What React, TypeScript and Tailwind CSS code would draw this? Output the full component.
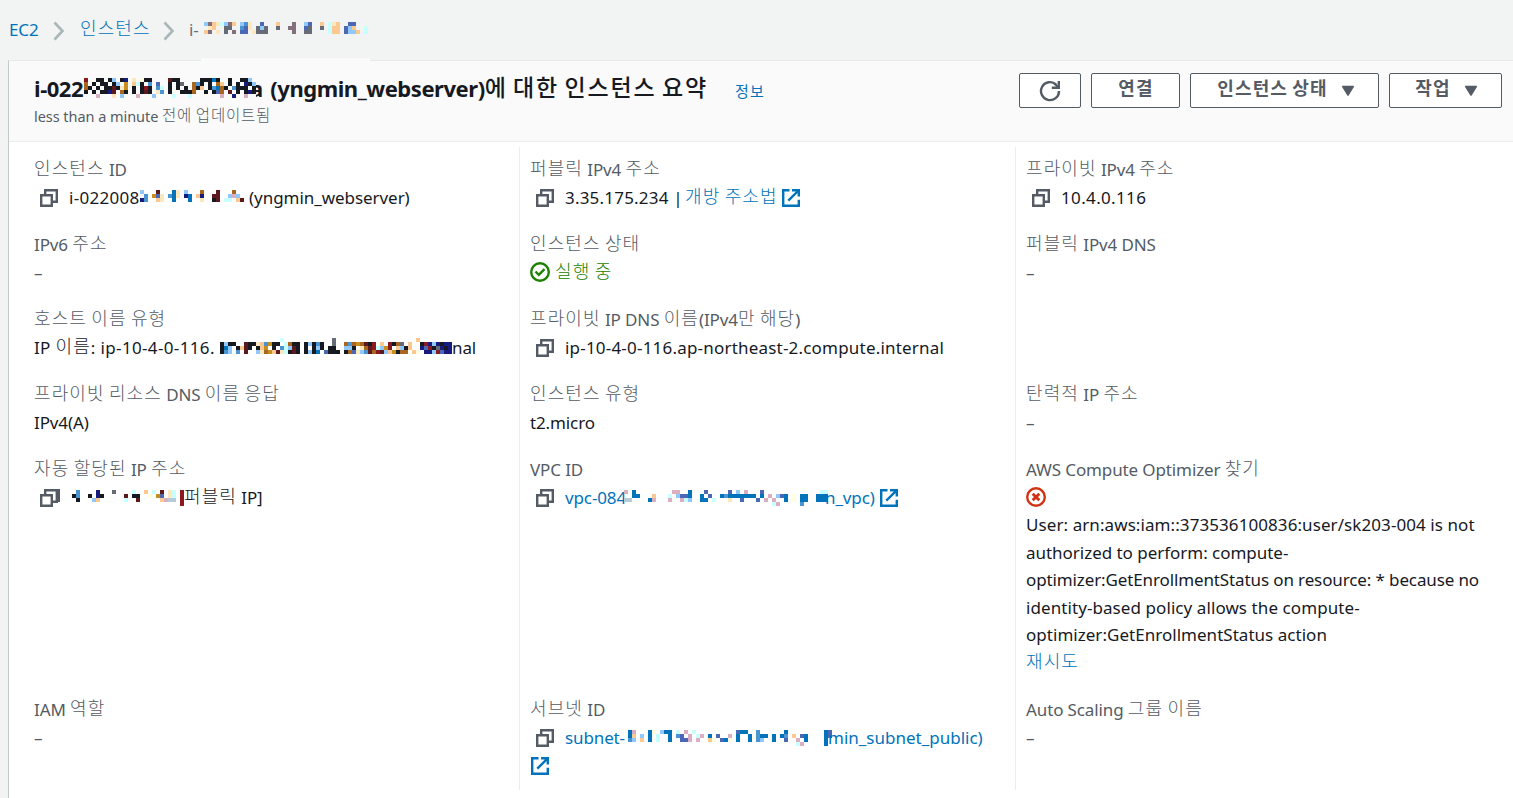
import type { ReactNode } from "react"
import clsx from "clsx"

const COLORS: Record<string, string> = {
  k: "#16191f", n: "#161b7d", b: "#0073bb", s: "#90c8fb", m: "#4a94d2", o: "#a9661f",
  g: "#c98f1e", t: "#fbc890", c: "#fde8bd", y: "#ffffe0", l: "#c8ffff", r: "#5c1a1f",
  R: "#8b1a20", G: "#666b75", p: "#84707d", u: "#dbaec2", v: "#4a68b4", q: "#b5ccd8",
}

const MASKS = {
  crumb: [
    "sptclspt.smc..v...t...p..sv..t.lct..vv...",
    ".ct..GG..mvc.GsG..G..pp..vG..G.ltt.vst..l",
    "tp.c.G.p.vv.cGGG......p..GG....ltt.vsst.l",
  ],
  title: [
    "R..kk.ks.kn.c.ykk....rkk.....kkkbk..k..kks.",
    "o.k.kk.ks.g.tlk.m.v..k.kG..omk.k.ot.k.k.nks",
    "ok.k.kkrkcg.k.kRk.ml.k.k.k.okt.kmbok.mkkk.k",
    "k.k.kknr.ok.k.krk.cm.k..kkko..k.kvo.r.k.knk",
    "...u...c.s...u...s....l...l.......u..n..u..",
  ],
  instanceId: [
    "s...r...bc.s...o...r...o..",
    ".m.gvc.mbc.nb.tn..rr..sus.",
    "nm..tc..b...b..c..kr.ll.tr",
  ],
  hostname: [
    "...............l............G....................t",
    "kskk..rkkctmgkk.lokk.kskmk..G..omogorkR.t.RkoG.t..kRnsnknn",
    "kbs.ktrk.ktg.k.mlsrk.k.ksk.kk..ssk.corRlsgR.tskt..nvRkGnkn",
    "kms.m.r..scogtrclkrk.kskb.vkkk.kovcsmroRrstgkoo.ty.nnsRvnn",
  ],
  autoIp: [
    ".m....n...G....l..t.l.r.cl.R",
    "km..k.nk.....r.kk..y.gv.cl.R",
    ".k...st......l..r.....tuqq.R",
    "...........................R",
  ],
  vpc: [
    "u.b.........uu..b...v.....v.s.u...v..............ll",
    "..bb...t...l.svvb..b.v..bmbbbbbbb.b.u.svb.y.bb..bbb",
    "qq....bu...u..uls..bb.l...c..v...v.u.u..b.y.bb..bbb",
    ".....................................lu.....m",
  ],
  subnet: [
    "bu...by.sbb.l.u.l..........vbb..m......b.........bv",
    "bt.s.b.l..b.mv.u.lu.b.v..u.b..b.mbb.b.bm.t.vb....bv",
    "ms.t.b.l..b..vvu.u..ty.vby.b..b.ms..b..v..u.b....b",
    "..........................................lu.....b",
  ],
}

function Mosaic({ rows, className }: { rows: string[]; className?: string }) {
  const cols = Math.max(...rows.map(row => row.length))
  return (
    <svg
      width={cols * 4}
      height={rows.length * 4}
      shapeRendering="crispEdges"
      className={clsx("block shrink-0", className)}
    >
      {rows.map((row, y) =>
        row.split("").map((cell, x) =>
          COLORS[cell] ? <rect key={`${x}-${y}`} x={x * 4} y={y * 4} width="4" height="4" fill={COLORS[cell]} /> : null
        )
      )}
    </svg>
  )
}

// Hangul runs get their own size, weight and tracking
function Txt({ children, className, ko = "text-[18px] font-light tracking-[1.1px]" }: { children: string; className?: string; ko?: string }) {
  return (
    <span className={clsx("whitespace-pre", className)}>
      {children.split(/([가-힣]+)/).map((part, i) =>
        i % 2 ? <span key={i} className={clsx("relative -top-px font-['Noto_Sans_CJK_KR',sans-serif] leading-none", ko)}>{part}</span> : part
      )}
    </span>
  )
}

function CopyIcon({ smeared }: { smeared?: boolean }) {
  return (
    <svg width="20" height="18" className="ml-[6px] mr-[9px] shrink-0" fill="none" stroke="#545b64" strokeWidth="2.4">
      <path d="M1.2 6.2h10.6v10.6H1.2z" />
      <path d="M5.2 6V1.2h11.6v11.6H12" />
      {smeared && <path d="M16 0h4v13h-4z" fill="#545b64" stroke="none" />}
    </svg>
  )
}

function ExternalIcon({ className }: { className?: string }) {
  return (
    <svg width="18" height="18" className={clsx("shrink-0", className)} fill="none" stroke="#0073bb" strokeWidth="2.4">
      <path d="M7.5 1.2H1.2v15.6h15.6v-6" />
      <path d="M10 1.2h6.8v6.3M16.5 1.5 6.3 11.7" />
    </svg>
  )
}

function CheckIcon() {
  return (
    <svg width="20" height="20" className="-mt-[2px] mr-[5px] shrink-0" fill="none" stroke="#1d8102" strokeWidth="2.4">
      <circle cx="10" cy="10" r="8.8" />
      <path d="m5.5 9.5 3.3 3.3 5.7-5.6" />
    </svg>
  )
}

function ErrorIcon() {
  return (
    <svg width="20" height="20" className="-mt-[2px]" fill="none" stroke="#d13212" strokeWidth="2.4">
      <circle cx="10" cy="10" r="8.8" />
      <path d="m6.7 6.7 6.6 6.6M13.3 6.7l-6.6 6.6" strokeWidth="2.9" />
    </svg>
  )
}

function Chevron({ className }: { className?: string }) {
  return (
    <svg width="12" height="20" className={clsx("shrink-0", className)} fill="none" stroke="#aab7b8" strokeWidth="2.6">
      <path d="m1.5 1.5 8 8.5-8 8.5" />
    </svg>
  )
}

function Caret() {
  return (
    <svg width="14" height="12" className="mt-[1px] shrink-0">
      <path d="M1.8 1.5h10.4L7 10z" fill="#545b64" stroke="#545b64" strokeWidth="1.6" strokeLinejoin="round" />
    </svg>
  )
}

function Button({ children, className }: { children: ReactNode; className: string }) {
  return (
    <button className={clsx("flex h-[35px] shrink-0 items-center justify-center rounded-[2px] border border-[#545b64] bg-white text-[17px] font-bold text-[#545b64]", className)}>
      {children}
    </button>
  )
}

function ButtonText({ children }: { children: string }) {
  return <Txt ko="text-[18px] font-bold tracking-[1.1px]" className="-mt-[1px]">{children}</Txt>
}

function Field({ label, children, className = "h-[75px]" }: { label: string; children: ReactNode; className?: string }) {
  return (
    <div className={className}>
      <div className="h-[28px] pt-px text-[#545b64]"><Txt>{label}</Txt></div>
      {children}
    </div>
  )
}

function Value({ children, className }: { children: ReactNode; className?: string }) {
  return <div className={clsx("flex h-[28px] items-center pt-[2px]", className)}>{children}</div>
}

const Dash = () => <Value className="text-[#545b64]">–</Value>

const COLUMN = "h-[643px] pt-[8px] shrink-0"

export default function App() {
  return (
    <div className="h-[798px] w-[1513px] overflow-hidden bg-[#f2f3f3] font-['Noto_Sans','Noto_Sans_CJK_KR',sans-serif] text-[17px] leading-[28px] tracking-[-0.12px] text-[#16191f]">
      <nav className="flex h-[60px] items-center pl-[9px] text-[#0073bb]">
        <span className="w-[44px]">EC2</span>
        <Chevron className="mt-[2px]" />
        <Txt className="ml-[15px] w-[83px]">인스턴스</Txt>
        <Chevron className="mt-[2px]" />
        <span className="ml-[14px] w-[15px] text-[#687078]">i-</span>
        <Mosaic rows={MASKS.crumb} className="-mt-[4px]" />
      </nav>

      <main className="relative ml-[8px] h-[738px] border-l border-t border-l-[#c3c8c9] border-t-[#e6eaea] bg-white">
        <div className="absolute -top-[3px] left-[192px] h-[4px] w-[169px] bg-[#fafafa]" />
        <header className="flex h-[81px] border-b border-[#eaeded] bg-[#fafafa] pl-[25px]">
          <div className="w-[985px] shrink-0 pt-[13px]">
            <h1 className="flex h-[30px] items-center text-[22px] font-bold tracking-[-0.45px]">
              <span className="-mt-[2px] w-[50px] whitespace-nowrap">i-022</span>
              <Mosaic rows={MASKS.title} className="z-10 -mt-[3px] bg-[#fafafa]" />
              <span className="-ml-[6px] -mt-[2px] w-[13px]">a</span>
              <Txt className="-mt-[2px] ml-[2px] w-[470px]" ko="text-[23px] font-medium tracking-[1.9px]">{" (yngmin_webserver)에 대한 인스턴스 요약"}</Txt>
              <Txt className="font-normal text-[#0073bb]" ko="text-[15px] font-normal tracking-[1.2px]">정보</Txt>
            </h1>
            <p className="text-[14.5px] leading-[24px] text-[#545b64]">
              <Txt ko="text-[15.5px] font-light tracking-[0.8px]" className="tracking-[-0.05px]">less than a minute 전에 업데이트됨</Txt>
            </p>
          </div>
          <div className="flex gap-[10px] pt-[12px]">
            <Button className="w-[62px]">
              <svg width="22" height="22" fill="none" stroke="#545b64" strokeWidth="2.4">
                <path d="M20 11a9 9 0 1 1-3-6.6" />
                <path d="M19.8 1v6.8h-7" />
                <path d="m19.5 7.5-4-4" />
              </svg>
            </Button>
            <Button className="w-[89px] pl-px"><ButtonText>연결</ButtonText></Button>
            <Button className="w-[189px] gap-[13px] pl-[3px]"><ButtonText>인스턴스 상태</ButtonText><Caret /></Button>
            <Button className="w-[113px] gap-[13px] pl-[2px]"><ButtonText>작업</ButtonText><Caret /></Button>
          </div>
        </header>

        <div className="flex pt-[5px]">
          <section className={clsx(COLUMN, "w-[510px] pl-[25px]")}>
            <Field label="인스턴스 ID">
              <Value>
                <CopyIcon />
                <span className="w-[71px] whitespace-nowrap tracking-[0.3px]">i-022008</span>
                <Mosaic rows={MASKS.instanceId} className="-mt-[4px]" />
                <span className="ml-[5px] tracking-[-0.05px]">(yngmin_webserver)</span>
              </Value>
            </Field>
            <Field label="IPv6 주소"><Dash /></Field>
            <Field label="호스트 이름 유형">
              <Value>
                <Txt className="w-[186px] tracking-[0.35px]">IP 이름: ip-10-4-0-116.</Txt>
                <Mosaic rows={MASKS.hostname} className="-mt-[5px]" />
                <span>nal</span>
              </Value>
            </Field>
            <Field label="프라이빗 리소스 DNS 이름 응답"><Value>IPv4(A)</Value></Field>
            <Field label="자동 할당된 IP 주소" className="h-[240px]">
              <Value>
                <CopyIcon smeared />
                <Mosaic rows={MASKS.autoIp} className="ml-[3px]" />
                <Txt>퍼블릭 IP]</Txt>
              </Value>
            </Field>
            <Field label="IAM 역할"><Dash /></Field>
          </section>

          <section className={clsx(COLUMN, "w-[496px] border-l border-[#eaeded] pl-[10px]")}>
            <Field label="퍼블릭 IPv4 주소">
              <Value>
                <CopyIcon />
                <span className="w-[120px] whitespace-pre tracking-[0.2px]">3.35.175.234 | </span>
                <Txt className="w-[97px] text-[#0073bb]">개방 주소법</Txt>
                <ExternalIcon />
              </Value>
            </Field>
            <Field label="인스턴스 상태">
              <Value className="text-[#1d8102]"><CheckIcon /><Txt>실행 중</Txt></Value>
            </Field>
            <Field label="프라이빗 IP DNS 이름(IPv4만 해당)">
              <Value><CopyIcon /><span className="tracking-[0.2px]">ip-10-4-0-116.ap-northeast-2.compute.internal</span></Value>
            </Field>
            <Field label="인스턴스 유형"><Value>t2.micro</Value></Field>
            <Field label="VPC ID" className="h-[240px]">
              <Value className="text-[#0073bb]">
                <CopyIcon />
                <span className="w-[59px] whitespace-nowrap">vpc-084</span>
                <Mosaic rows={MASKS.vpc} />
                <span className="-ml-[3px] w-[55px] whitespace-nowrap">n_vpc)</span>
                <ExternalIcon />
              </Value>
            </Field>
            <Field label="서브넷 ID">
              <Value className="text-[#0073bb]">
                <CopyIcon />
                <span className="w-[63px]">subnet-</span>
                <Mosaic rows={MASKS.subnet} />
                <span className="-ml-[4px] tracking-[0px]">min_subnet_public)</span>
              </Value>
              <Value><ExternalIcon className="ml-px" /></Value>
            </Field>
          </section>

          <section className={clsx(COLUMN, "w-[498px] border-l border-[#eaeded] pl-[10px]")}>
            <Field label="프라이빗 IPv4 주소"><Value><CopyIcon /><span className="tracking-[0.35px]">10.4.0.116</span></Value></Field>
            <Field label="퍼블릭 IPv4 DNS" className="h-[150px]"><Dash /></Field>
            <Field label="탄력적 IP 주소"><Dash /></Field>
            <Field label="AWS Compute Optimizer 찾기" className="h-[240px]">
              <Value><ErrorIcon /></Value>
              <p className="whitespace-nowrap leading-[27.5px]">
                <span className="tracking-[0.08px]">User: arn:aws:iam::373536100836:user/sk203-004 is not</span><br />
                <span className="tracking-[-0.03px]">authorized to perform: compute-</span><br />
                optimizer:GetEnrollmentStatus on resource: * because no<br />
                <span className="tracking-[0.08px]">identity-based policy allows the compute-</span><br />
                <span className="tracking-[0.03px]">optimizer:GetEnrollmentStatus action</span>
              </p>
              <a className="block pt-px leading-[26px] text-[#0073bb]"><Txt>재시도</Txt></a>
            </Field>
            <Field label="Auto Scaling 그룹 이름"><Dash /></Field>
          </section>
        </div>
      </main>
    </div>
  )
}
